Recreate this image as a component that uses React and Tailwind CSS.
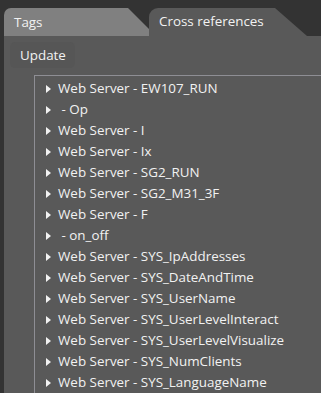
import React from "react";

const rows = [
  "Web Server - EW107_RUN",
  " - Op",
  "Web Server - I",
  "Web Server - Ix",
  "Web Server - SG2_RUN",
  "Web Server - SG2_M31_3F",
  "Web Server - F",
  " - on_off",
  "Web Server - SYS_IpAddresses",
  "Web Server - SYS_DateAndTime",
  "Web Server - SYS_UserName",
  "Web Server - SYS_UserLevelInteract",
  "Web Server - SYS_UserLevelVisualize",
  "Web Server - SYS_NumClients",
  "Web Server - SYS_LanguageName",
];

export default function App() {
  return (
    <div
      className="w-[321px] h-[393px] overflow-hidden bg-[#333333] flex flex-col text-[#f2f2f2]"
      style={{ fontFamily: '"Open Sans", "Noto Sans", sans-serif' }}
    >
      <div className="flex pt-2 pl-1 h-[36px] shrink-0">
        <div
          className="w-[145px] h-[28px] bg-[#808080] rounded-tl-[7px] pl-[10px] text-[13.4px] leading-[28px]"
          style={{ clipPath: "polygon(0 0, 124px 0, 145px 21px, 145px 28px, 0 28px)" }}
        >
          Tags
        </div>
        <div
          className="w-[158px] h-[28px] bg-[#595959] rounded-tl-[9px] pl-[10px] text-[13.4px] leading-[26px]"
          style={{ clipPath: "polygon(0 0, 126px 0, 158px 28px, 0 28px)" }}
        >
          Cross references
        </div>
      </div>
      <div className="ml-1 flex-1 bg-[#595959] flex flex-col">
        <div className="mt-[6px] ml-[6px] w-[65px] h-[26px] rounded-[5px] bg-[#565656] text-[13.4px] leading-[26px] pl-[10px]">
          Update
        </div>
        <div className="mt-[7px] ml-[30px] flex-1 border-l border-t border-[#8e8e94] pt-[2px]">
          {rows.map((r, i) => (
            <div key={i} className="h-[21px] flex items-center text-[13.4px] whitespace-pre">
              <svg width="5" height="8" viewBox="0 0 5 8" className="ml-[11px] mr-[7px] shrink-0">
                <path d="M0 0 L5 4 L0 8 Z" fill="#f2f2f2" />
              </svg>
              <span>{r}</span>
            </div>
          ))}
        </div>
      </div>
    </div>
  );
}
